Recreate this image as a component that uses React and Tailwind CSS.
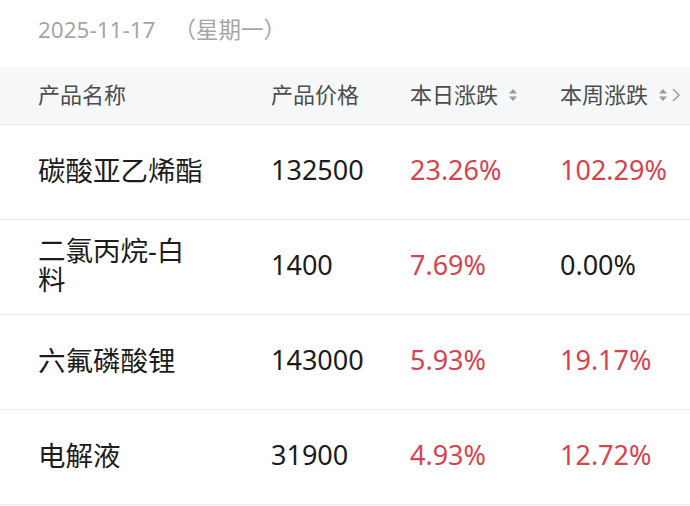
import React from 'react';

const rows = [
  { name: '碳酸亚乙烯酯', price: '132500', day: '23.26%', week: '102.29%', dayUp: true, weekUp: true },
  { name: '二氯丙烷-白料', price: '1400', day: '7.69%', week: '0.00%', dayUp: true, weekUp: false },
  { name: '六氟磷酸锂', price: '143000', day: '5.93%', week: '19.17%', dayUp: true, weekUp: true },
  { name: '电解液', price: '31900', day: '4.93%', week: '12.72%', dayUp: true, weekUp: true },
];

const font = { fontFamily: '"Noto Sans", "Noto Sans CJK SC", sans-serif' };

function SortIcon() {
  return (
    <svg width="10" height="14" viewBox="0 0 10 14" className="ml-[10px] mt-[2px]">
      <path d="M5 1 L9 5.5 L1 5.5 Z" fill="#9a9a9a" />
      <path d="M5 13 L9 8.5 L1 8.5 Z" fill="#9a9a9a" />
    </svg>
  );
}

export default function App() {
  return (
    <div className="w-[690px] h-[506px] bg-white overflow-hidden" style={font}>
      <div className="h-[67px] flex items-center pl-[38px] pb-[8px] text-[22.5px] text-[#a6a6a6]">
        2025-11-17<span className="ml-[18px]">（星期一）</span>
      </div>

      <div className="h-[58px] bg-[#f6f7f9] border-b border-[#ececec] grid grid-cols-[233px_139px_150px_1fr] pl-[38px] pb-[3px] items-center text-[22px] text-[#4d4d4d]">
        <div>产品名称</div>
        <div>产品价格</div>
        <div className="flex items-center">本日涨跌<SortIcon /></div>
        <div className="flex items-center">
          本周涨跌<SortIcon />
          <svg width="10" height="16" viewBox="0 0 10 16" className="ml-[3px] mt-[2px]">
            <path d="M2 2 L8 8 L2 14" fill="none" stroke="#a0a0a0" strokeWidth="1.6" />
          </svg>
        </div>
      </div>

      {rows.map((r) => (
        <div key={r.name} className="h-[95px] border-b border-[#ededed] grid grid-cols-[233px_139px_150px_1fr] pl-[38px] pb-[4px] items-center text-[27px] text-[#1c1c1c]">
          <div className="w-[170px] leading-[29px] text-[27.5px]">{r.name}</div>
          <div>{r.price}</div>
          <div className={r.dayUp ? 'text-[#d5434f]' : ''}>{r.day}</div>
          <div className={r.weekUp ? 'text-[#d5434f]' : ''}>{r.week}</div>
        </div>
      ))}
    </div>
  );
}
